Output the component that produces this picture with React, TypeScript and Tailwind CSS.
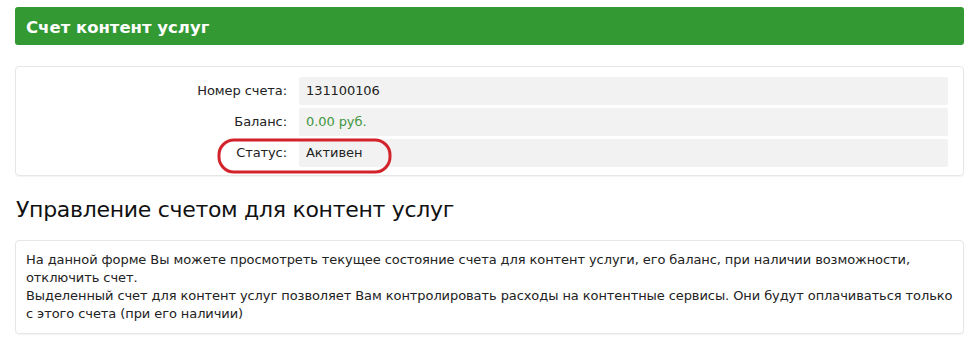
export default function App() {
  const rows = [
    { label: 'Номер счета:', value: '131100106', cls: 'text-[#222]' },
    { label: 'Баланс:', value: '0.00 руб.', cls: 'text-[#3f963f]' },
    { label: 'Статус:', value: 'Активен', cls: 'text-[#222]' },
  ]
  return (
    <div
      className="w-[973px] h-[345px] bg-white pt-[7px] pl-[15px] pr-[9px] text-[13px] tracking-[-0.08px] text-[#222]"
      style={{ fontFamily: "Tahoma, 'DejaVu Sans', sans-serif" }}
    >
      {/* header */}
      <div className="h-[38px] rounded-[3px] bg-[#339933] flex items-center pl-[11px] pt-[4px]">
        <span className="text-white font-bold text-[16.5px] tracking-normal">Счет контент услуг</span>
      </div>

      {/* info panel */}
      <div className="relative mt-[21px] h-[110px] rounded-[4px] border border-[#e6e6e6] pt-[10px] pr-[15px] flex flex-col gap-[3px] shadow-[0_1px_1px_rgba(0,0,0,0.05)]">
        {rows.map((r) => (
          <div key={r.label} className="flex h-[28px]">
            <div className="w-[283px] shrink-0 text-right pr-[12px] leading-[28px]">{r.label}</div>
            <div className={`flex-1 bg-[#f2f2f2] rounded-[2px] pl-[7px] leading-[28px] ${r.cls}`}>{r.value}</div>
          </div>
        ))}
        {/* red annotation */}
        <svg className="absolute left-[201px] top-[71px]" width="176" height="37" viewBox="0 0 176 37">
          <rect x="2" y="2" width="171" height="32" rx="15" fill="none" stroke="#d2232a" strokeWidth="3" />
        </svg>
      </div>

      <h2 className="mt-[18px] text-[22px] tracking-[-0.3px] leading-[32px] font-normal text-[#111] pl-[1px]">
        Управление счетом для контент услуг
      </h2>

      <div className="mt-[14px] rounded-[4px] border border-[#e6e6e6] pl-[10px] pr-[6px] pt-[10px] pb-[10px] leading-[18px] shadow-[0_1px_1px_rgba(0,0,0,0.05)]">
        <p>
          На данной форме Вы можете просмотреть текущее состояние счета для контент услуги, его баланс, при наличии
          возможности, отключить счет.
        </p>
        <p>
          Выделенный счет для контент услуг позволяет Вам контролировать расходы на контентные сервисы. Они будут
          оплачиваться только с этого счета (при его наличии)
        </p>
      </div>
    </div>
  )
}
